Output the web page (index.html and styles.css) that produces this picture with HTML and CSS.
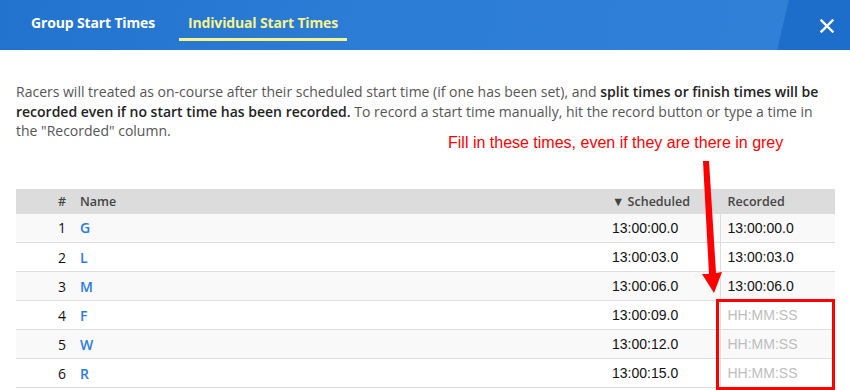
FILE: index.html
```html
<!DOCTYPE html>
<html>
<head>
<meta charset="utf-8">
<link rel="stylesheet" href="styles.css">
</head>
<body>
<div class="modal">
  <header class="topbar">
    <nav class="tabs">
      <a class="tab">Group Start Times</a>
      <a class="tab active">Individual Start Times</a>
    </nav>
    <button class="close" aria-label="Close">
      <svg width="14" height="14" viewBox="0 0 14 14"><path d="M1.5 1.5 L12.5 12.5 M12.5 1.5 L1.5 12.5" stroke="#fff" stroke-width="2.4" stroke-linecap="square"/></svg>
    </button>
  </header>
  <main class="content">
    <p class="intro">Racers will treated as on-course after their scheduled start time (if one has been set), and <b>split times or finish times will be recorded even if no start time has been recorded.</b> To record a start time manually, hit the record button or type a time in the "Recorded" column.</p>
    <table class="racers">
      <thead>
        <tr><th class="num">#</th><th class="name">Name</th><th class="sched">&#9660; Scheduled</th><th class="rec">Recorded</th></tr>
      </thead>
      <tbody>
        <tr><td class="num">1</td><td class="name"><a>G</a></td><td class="sched">13:00:00.0</td><td class="rec"><span class="val">13:00:00.0</span></td></tr>
        <tr><td class="num">2</td><td class="name"><a>L</a></td><td class="sched">13:00:03.0</td><td class="rec"><span class="val">13:00:03.0</span></td></tr>
        <tr><td class="num">3</td><td class="name"><a>M</a></td><td class="sched">13:00:06.0</td><td class="rec"><span class="val">13:00:06.0</span></td></tr>
        <tr><td class="num">4</td><td class="name"><a>F</a></td><td class="sched">13:00:09.0</td><td class="rec"><span class="ph">HH:MM:SS</span></td></tr>
        <tr><td class="num">5</td><td class="name"><a>W</a></td><td class="sched">13:00:12.0</td><td class="rec"><span class="ph">HH:MM:SS</span></td></tr>
        <tr><td class="num">6</td><td class="name"><a>R</a></td><td class="sched">13:00:15.0</td><td class="rec"><span class="ph">HH:MM:SS</span></td></tr>
      </tbody>
    </table>
  </main>
  <div class="annot">Fill in these times, even if they are there in grey</div>
  <svg class="arrow" width="40" height="150" viewBox="0 0 40 150">
    <polygon points="3,2 9,2 16,114 22,113 14,134 2,115 9,115" fill="#f00"/>
  </svg>
  <div class="redbox"></div>
</div>
</body>
</html>
```

FILE: styles.css
```css
* { box-sizing: border-box; }
html, body { margin: 0; padding: 0; background: #fff; }
body { width: 850px; height: 390px; overflow: hidden; font-family: "Open Sans", "Liberation Sans", sans-serif; }
.modal { position: relative; width: 850px; height: 390px; }

.topbar {
  height: 50px;
  display: flex;
  align-items: stretch;
  justify-content: space-between;
  background: linear-gradient(103deg, #2273cd 0%, #2c7dd6 45%, #3080d8 91.5%, #1d6ecb 91.6%, #1d6ecb 100%);
  padding-left: 22px;
}
.tabs { display: flex; gap: 15px; }
.tab {
  display: flex;
  align-items: center;
  padding: 6px 9px 0;
  color: #fff;
  font-weight: 700;
  font-size: 14px;
  letter-spacing: -0.15px;
  border-bottom: 3px solid transparent;
  height: 41px;
}
.tab.active { color: #f8f38e; border-bottom-color: #f8f38e; }
.close {
  width: 44px;
  border: 0;
  background: transparent;
  display: flex;
  align-items: center;
  justify-content: center;
  padding: 2px 2px 0 0;
}

.content { padding: 0 15px 0 16px; }
.intro {
  margin: 32px 0 0;
  font-size: 14px;
  line-height: 19.5px;
  color: #555;
}
.intro b { color: #222; font-weight: 600; }
.annot {
  position: absolute;
  left: 448px;
  top: 135px;
  font-family: "Liberation Sans", Arial, sans-serif;
  font-size: 16px;
  color: #f00;
  line-height: 16px;
}
.racers {
  margin-top: 48px;
  width: 819px;
  border-collapse: collapse;
  font-size: 14px;
}
.racers thead tr { background: #dcdcdc; height: 25px; }
.racers th { font-weight: 600; color: #444; text-align: left; padding: 0; font-size: 12.5px; }
.racers tbody tr { height: 29px; border-bottom: 1px solid #dddddd; }
.racers tbody tr:nth-child(odd) { background: #f9f9f9; }
.racers td { padding: 0; color: #111; }
.racers .num { width: 50px; text-align: right; }
.racers .name { padding-left: 14px; }
.racers .name a { color: #2a7be3; font-weight: 600; }
.racers .sched { width: 108px; padding-left: 0; }
.racers td.sched { font-family: "Liberation Sans", Arial, sans-serif; font-size: 14px; }
.racers .rec { width: 115px; border-left: 1px solid #dddddd; padding-left: 7px; }
.racers thead .rec { border-left-color: #dcdcdc; }
.racers td.rec { font-family: "Liberation Sans", Arial, sans-serif; font-size: 14px; vertical-align: top; padding-top: 6px; }
.ph { color: #bdbdbd; }

.arrow { position: absolute; left: 700px; top: 159px; }
.redbox {
  position: absolute;
  left: 716px;
  top: 299px;
  width: 119px;
  height: 91px;
  border: 3px solid #f00;
}
```
